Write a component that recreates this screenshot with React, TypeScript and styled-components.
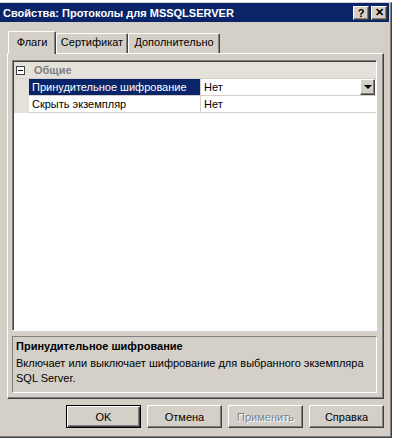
import styled, { createGlobalStyle } from "styled-components";

const GlobalStyle = createGlobalStyle`
  body {
    margin: 0;
    background: #ffffff;
    font-family: "Liberation Sans", Arial, sans-serif;
    font-size: 11px;
  }
`;

const Window = styled.div`
  margin-top: 2px;
  width: 392px;
  height: 436px;
  box-sizing: border-box;
  background: #d4d0c8;
  border-top: 1px solid #d4d0c8;
  border-right: 1px solid #404040;
  border-bottom: 1px solid #404040;
  box-shadow: inset -1px -1px #808080;
  display: flex;
  flex-direction: column;
`;

const TitleBar = styled.div`
  height: 19px;
  margin-right: 2px;
  background: #0a246a;
  display: flex;
  align-items: center;
  justify-content: space-between;
  padding: 0 2px 0 3px;
`;

const Title = styled.span`
  color: #ffffff;
  font-weight: bold;
  font-size: 11px;
`;

const TitleButtons = styled.div`
  display: flex;
  gap: 2px;
`;

const TitleButton = styled.div`
  width: 16px;
  height: 14px;
  box-sizing: border-box;
  background: #d4d0c8;
  border: 1px solid;
  border-color: #ffffff #404040 #404040 #ffffff;
  box-shadow: inset -1px -1px #808080;
  display: flex;
  align-items: center;
  justify-content: center;
  font-weight: bold;
  font-size: 11px;
  color: #000;
`;

const Body = styled.div`
  padding: 9px 7px 0 7px;
  display: flex;
  flex-direction: column;
`;

const TabStrip = styled.div`
  display: flex;
  align-items: flex-end;
  height: 23px;
  padding-left: 1px;
  margin-bottom: -1px;
  position: relative;
  z-index: 1;
`;

const Tab = styled.div<{ $active?: boolean; $w: number }>`
  width: ${(p) => p.$w}px;
  height: ${(p) => (p.$active ? 23 : 20)}px;
  margin-bottom: ${(p) => (p.$active ? 0 : 1)}px;
  box-sizing: border-box;
  background: #d4d0c8;
  border: 1px solid;
  border-bottom: none;
  border-color: #ffffff #404040 #404040 #ffffff;
  border-radius: 2px 2px 0 0;
  box-shadow: inset -1px 0 #808080;
  display: flex;
  justify-content: center;
  padding-top: ${(p) => (p.$active ? 4 : 2)}px;
  color: #000;
`;

const Panel = styled.div`
  width: 377px;
  height: 346px;
  box-sizing: border-box;
  border: 1px solid;
  border-color: #ffffff #404040 #404040 #ffffff;
  box-shadow: inset -1px -1px #808080;
  padding: 6px 6px 0 4px;
  display: flex;
  flex-direction: column;
`;

const Grid = styled.div`
  height: 271px;
  box-sizing: border-box;
  background: #ffffff;
  border: 1px solid;
  border-color: #808080 #ffffff #ffffff #808080;
  box-shadow: inset 1px 1px #404040;
  padding: 1px 0 0 1px;
  display: grid;
  grid-template-columns: 15px 172px 1fr;
  grid-auto-rows: 17px;
  align-content: start;
`;

const CategoryRow = styled.div`
  grid-column: 1 / 4;
  background: #e4e1da;
  display: flex;
  align-items: center;
  gap: 9px;
  padding-left: 2px;
  font-weight: bold;
  color: #808080;
  border-bottom: 1px solid #d4d0c8;
`;

const Expander = styled.div`
  width: 9px;
  height: 9px;
  box-sizing: border-box;
  border: 1px solid #404040;
  background: #ffffff;
  display: flex;
  align-items: center;
  justify-content: center;
  &::after {
    content: "";
    width: 5px;
    height: 1px;
    background: #000;
  }
`;

const Margin = styled.div`
  background: #e4e1da;
`;

const Cell = styled.div<{ $selected?: boolean; $label?: boolean }>`
  display: flex;
  align-items: center;
  justify-content: space-between;
  padding-left: 3px;
  background: ${(p) => (p.$selected ? "#0a246a" : "#ffffff")};
  color: ${(p) => (p.$selected ? "#ffffff" : "#000000")};
  border-bottom: 1px solid #d4d0c8;
  border-right: ${(p) => (p.$label ? "1px solid #d4d0c8" : "none")};
  white-space: nowrap;
  overflow: hidden;
`;

const DropButton = styled.div`
  width: 15px;
  height: 16px;
  box-sizing: border-box;
  margin-right: 1px;
  background: #d4d0c8;
  border: 1px solid;
  border-color: #ffffff #404040 #404040 #ffffff;
  box-shadow: inset -1px -1px #808080;
  display: flex;
  align-items: center;
  justify-content: center;
  &::after {
    content: "";
    border-left: 4px solid transparent;
    border-right: 4px solid transparent;
    border-top: 4px solid #000;
  }
`;

const Description = styled.div`
  margin-top: 5px;
  height: 57px;
  box-sizing: border-box;
  border: 1px solid;
  border-color: #808080 #ffffff #ffffff #808080;
  padding: 2px 3px;
  line-height: 15px;
  color: #000;
`;

const DescTitle = styled.div`
  font-weight: bold;
  margin-bottom: 2px;
`;

const ButtonRow = styled.div`
  display: flex;
  justify-content: flex-end;
  gap: 6px;
  margin-top: 6px;
`;

const Button = styled.button<{ $default?: boolean }>`
  width: 75px;
  height: 23px;
  box-sizing: border-box;
  background: #d4d0c8;
  font-family: "Liberation Sans", Arial, sans-serif;
  font-size: 11px;
  color: ${(p) => (p.disabled ? "#808080" : "#000")};
  text-shadow: ${(p) => (p.disabled ? "1px 1px #ffffff" : "none")};
  border: 1px solid;
  border-color: ${(p) =>
    p.$default ? "#000 #000 #000 #000" : "#ffffff #404040 #404040 #ffffff"};
  box-shadow: ${(p) =>
    p.$default
      ? "inset 1px 1px #ffffff, inset -1px -1px #404040, inset -2px -2px #808080"
      : "inset -1px -1px #808080"};
  padding: 0;
`;

export default function App() {
  return (
    <>
      <GlobalStyle />
      <Window>
        <TitleBar>
          <Title>Свойства: Протоколы для MSSQLSERVER</Title>
          <TitleButtons>
            <TitleButton>?</TitleButton>
            <TitleButton>✕</TitleButton>
          </TitleButtons>
        </TitleBar>
        <Body>
          <TabStrip>
            <Tab $active $w={48}>Флаги</Tab>
            <Tab $w={72}>Сертификат</Tab>
            <Tab $w={92}>Дополнительно</Tab>
          </TabStrip>
          <Panel>
            <Grid>
              <CategoryRow>
                <Expander />
                Общие
              </CategoryRow>
              <Margin />
              <Cell $label $selected>Принудительное шифрование</Cell>
              <Cell>
                Нет
                <DropButton />
              </Cell>
              <Margin />
              <Cell $label>Скрыть экземпляр</Cell>
              <Cell>Нет</Cell>
            </Grid>
            <Description>
              <DescTitle>Принудительное шифрование</DescTitle>
              Включает или выключает шифрование для выбранного экземпляра SQL Server.
            </Description>
          </Panel>
          <ButtonRow>
            <Button $default>OK</Button>
            <Button>Отмена</Button>
            <Button disabled>Применить</Button>
            <Button>Справка</Button>
          </ButtonRow>
        </Body>
      </Window>
    </>
  );
}
